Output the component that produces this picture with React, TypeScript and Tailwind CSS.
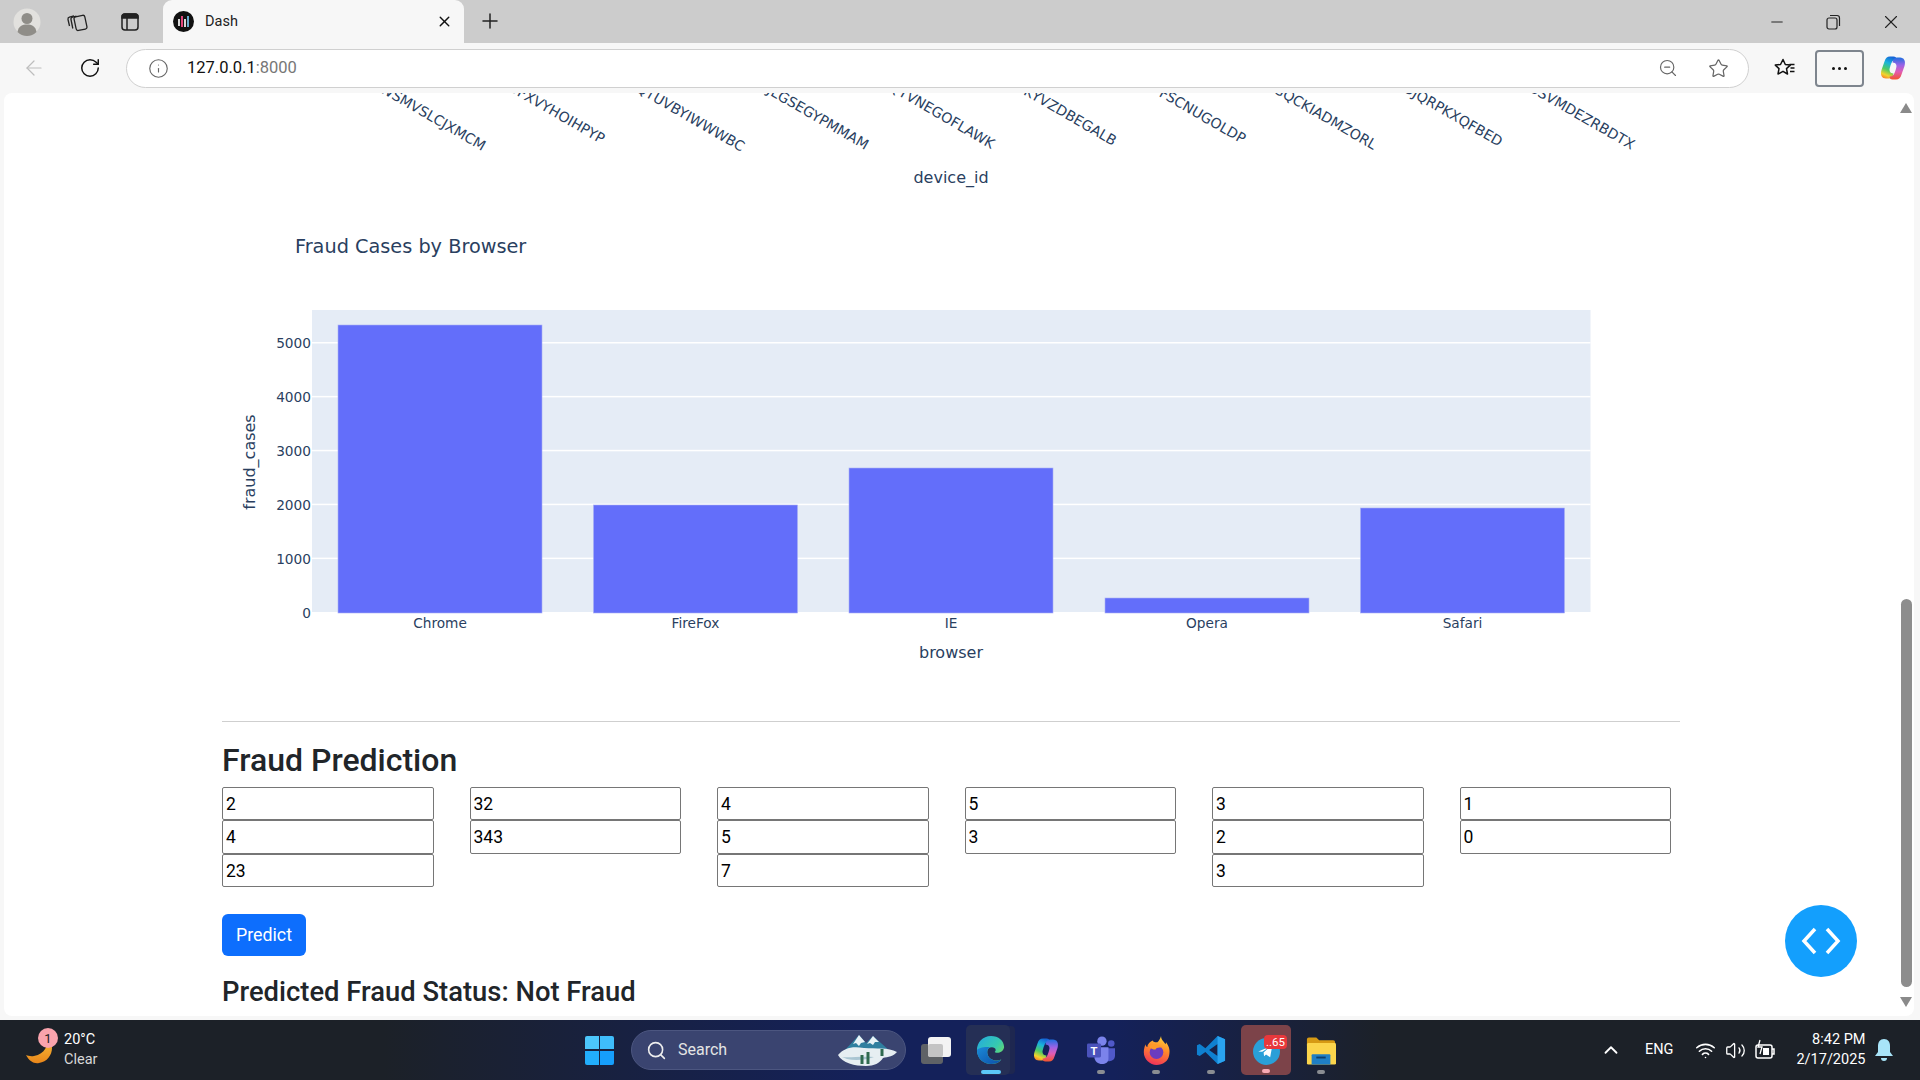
import { ArrowLeft, ChevronUp, Info, Minus, Plus, RotateCw, Search, Star, Volume2, Wifi, X, ZoomOut } from "lucide-react";

const ui = "font-['Roboto',sans-serif]";
const plotFont = "'DejaVu Sans', Verdana, sans-serif";

const deviceLabels = [
  { text: "WSMVSLCJXMCM", x: 482, y: 151 },
  { text: "OFXVYHOIHPYP", x: 601, y: 144 },
  { text: "QTUVBYIWWWBC", x: 741, y: 152 },
  { text: "JLGSEGYPMMAM", x: 865, y: 150 },
  { text: "QYVNEGOFLAWK", x: 991, y: 149 },
  { text: "SKYVZDBEGALB", x: 1113, y: 146 },
  { text: "KPFSCNUGOLDP", x: 1242, y: 144 },
  { text: "GQCKIADMZORL", x: 1373, y: 150 },
  { text: "DJQRPKXQFBED", x: 1499, y: 147 },
  { text: "USVMDEZRBDTX", x: 1631, y: 150 },
];

const bars = [
  { name: "Chrome", x: 338, top: 325 },
  { name: "FireFox", x: 593.5, top: 505 },
  { name: "IE", x: 849, top: 468 },
  { name: "Opera", x: 1105, top: 598 },
  { name: "Safari", x: 1360.5, top: 508 },
];

const ticks = [0, 1000, 2000, 3000, 4000, 5000];

const formColumns = [
  ["2", "4", "23"],
  ["32", "343"],
  ["4", "5", "7"],
  ["5", "3"],
  ["3", "2", "3"],
  ["1", "0"],
];

// the svg uses screen coordinates, the viewBox starts where the page starts
function Charts() {
  return (
    <svg viewBox="4 93 1896 628" width={1896} height={628} className="block shrink-0" style={{ fontFamily: plotFont }}>
      {deviceLabels.map((l) => (
        <text key={l.text} x={l.x} y={l.y} textAnchor="end" fontSize={14.1} fill="#2a3f5f" transform={`rotate(30 ${l.x} ${l.y})`}>
          {l.text}
        </text>
      ))}
      <text x={951} y={183} textAnchor="middle" fontSize={16} fill="#2a3f5f">device_id</text>
      <text x={295} y={253} fontSize={19.3} fill="#2a3f5f">Fraud Cases by Browser</text>

      <rect x={312} y={310} width={1278.5} height={302} fill="#e5ecf6" />
      {ticks.slice(1).map((t) => (
        <rect key={t} x={312} y={612.5 - t * 0.0539 - 1} width={1278.5} height={1.5} fill="#ffffff" />
      ))}
      {bars.map((b) => (
        <g key={b.name}>
          <rect x={b.x} y={b.top} width={204} height={613 - b.top} fill="#636efa" stroke="#a8b0f5" strokeWidth={0.6} />
          <text x={b.x + 102} y={628} textAnchor="middle" fontSize={13.7} fill="#2a3f5f">{b.name}</text>
        </g>
      ))}
      {ticks.map((t) => (
        <text key={t} x={311} y={613 - t * 0.0541 + 5} textAnchor="end" fontSize={13.7} fill="#2a3f5f">{t}</text>
      ))}
      <text x={951} y={658} textAnchor="middle" fontSize={16} fill="#2a3f5f">browser</text>
      <text x={255} y={462} textAnchor="middle" fontSize={16} fill="#2a3f5f" transform="rotate(-90 255 462)">fraud_cases</text>
    </svg>
  );
}

function Workspaces() {
  return (
    <svg width="22" height="22" viewBox="0 0 22 22" fill="none" stroke="#222" strokeWidth="1.3">
      <path d="M3.500 15 2 8.500a2 2 0 0 1 1.400-2.300L8 4.800" />
      <path d="M6.800 17.500 5 8.500a2 2 0 0 1 1.500-2.300l4-1" />
      <rect x="9" y="5" width="11" height="14" rx="2" transform="rotate(-12 14 12)" />
    </svg>
  );
}

function TabActions() {
  return (
    <svg width="20" height="20" viewBox="0 0 20 20" fill="none" stroke="#222" strokeWidth="1.500">
      <rect x="2" y="2" width="16" height="16" rx="3" />
      <path d="M2 5a3 3 0 0 1 3-3h10a3 3 0 0 1 3 3v1H2z" fill="#222" />
      <path d="M7 6v12" />
    </svg>
  );
}

function DashIcon() {
  return (
    <div className="flex h-[21px] w-[21px] items-center justify-center gap-[1.5px] rounded-full bg-[#111]">
      <span className="mt-[2px] h-[7px] w-[1.5px] bg-[#d8d8d8]" />
      <span className="h-[11px] w-[1.5px] bg-[#e0457b]" />
      <span className="mt-[3px] h-[8px] w-[1.5px] bg-[#d8d8d8]" />
      <span className="h-[11px] w-[1.5px] bg-[#6ac]" />
    </div>
  );
}

function Avatar() {
  return (
    <svg width="28" height="28" viewBox="0 0 28 28">
      <circle cx="14" cy="14" r="13.500" fill="#e2e1de" />
      <circle cx="14" cy="10.500" r="5.500" fill="#8f8d88" />
      <path d="M4.500 24c1-6 5-7.500 9.500-7.500s8.500 1.500 9.500 7.500a13.500 13.500 0 0 1-19 0z" fill="#8f8d88" />
    </svg>
  );
}

function FavoritesIcon() {
  return (
    <svg width="24" height="24" viewBox="0 0 24 24" fill="none" stroke="#111" strokeWidth="1.500" strokeLinejoin="round">
      <path d="M10 3.500 12.300 8.500l5 .6-3.800 3.500 1 5.400L10 15.300 5 18l1-5.400L2.300 9.100l5.200-.6z" />
      <path d="M16.500 8.500h5M17.500 12h4M17 15.500h4.500" strokeWidth="1.300" />
    </svg>
  );
}

function Copilot({ size = 28, id }: { size?: number; id: string }) {
  return (
    <svg width={size} height={size} viewBox="0 0 28 28">
      <defs>
        <linearGradient id={`${id}a`} x1="0.6" y1="0" x2="0.3" y2="1">
          <stop offset="0" stopColor="#1565d8" />
          <stop offset="0.3" stopColor="#19b3dc" />
          <stop offset="0.6" stopColor="#4fcb63" />
          <stop offset="0.85" stopColor="#f4d32c" />
          <stop offset="1" stopColor="#f58a2a" />
        </linearGradient>
        <linearGradient id={`${id}b`} x1="0.5" y1="0" x2="0.5" y2="1">
          <stop offset="0" stopColor="#1f6fe0" />
          <stop offset="0.35" stopColor="#9a63e6" />
          <stop offset="0.65" stopColor="#e15cb4" />
          <stop offset="1" stopColor="#f4542c" />
        </linearGradient>
      </defs>
      <path d="M11 2.500c-3 0-4.500 1.800-5.500 5L2.500 16c-1.500 5 .5 8.500 4.500 8.500h3c2 0 3.500-1 4-3l.5-2c-2 0-4-1-4-3.500 0-1 1-5 2-7 .8-2 2-3.500 5-3.500 0-2-1-3-3-3z" fill={`url(#${id}a)`} />
      <path d="M17 25.500c3 0 4.500-1.800 5.500-5l3-8.500c1.500-5-.5-8.500-4.500-8.500h-3c-2 0-3.500 1-4 3l-.5 2c2 0 4 1 4 3.500 0 1-1 5-2 7-.8 2-2 3.500-5 3.500 0 2 1 3 3 3z" fill={`url(#${id}b)`} />
    </svg>
  );
}

function WindowsLogo() {
  return (
    <div className="grid h-[29px] w-[29px] grid-cols-2 gap-[1.5px]">
      <span className="rounded-tl-[2px] bg-[#4cc6fb]" />
      <span className="rounded-tr-[2px] bg-[#3fbdfb]" />
      <span className="rounded-bl-[2px] bg-[#22aefc]" />
      <span className="rounded-br-[2px] bg-[#169efb]" />
    </div>
  );
}

function Mountains() {
  return (
    <svg width="60" height="32" viewBox="0 0 60 32">
      <path d="M6 17 21 1l7 8 7-7 17 15z" fill="#2f7f9f" />
      <path d="M21 1l6 7-4 1-2 3-3-3-3 1zM35 2l6 6-4 0-2 3-3-2-3 1z" fill="#e8f2f6" />
      <path d="M0 21c6-7 14-9 26-7 12 1 24-1 33 4-3 4-9 5-14 6-3 5-9 8-17 8-11 0-24-3-28-11z" fill="#e6eef2" />
      <path d="M4 23c8 1 18-1 32 0-8 3-19 4-27 2z" fill="#a9c5d2" />
      <path d="M24 30v-9M30 30V18M44 22v-7" stroke="#2f6a4f" strokeWidth="3" />
    </svg>
  );
}

function TaskView() {
  return (
    <div className="relative h-[27px] w-[30px]">
      <span className="absolute bottom-0 left-0 h-[20px] w-[22px] rounded-[3px] bg-[#5f6266]" />
      <span className="absolute right-0 top-0 h-[20px] w-[23px] rounded-[3px] bg-[#f3f3f3]" />
      <span className="absolute left-[7px] top-[7px] h-[13px] w-[15px] rounded-[2px] bg-[#c4c4c4]" />
    </div>
  );
}

function Edge() {
  return (
    <svg width="30" height="30" viewBox="0 0 32 32" className="ml-[6px]">
      <defs>
        <linearGradient id="edgeA" x1="0" y1="0" x2="1" y2="0.8">
          <stop offset="0" stopColor="#23a9e0" />
          <stop offset="0.6" stopColor="#36c9b0" />
          <stop offset="1" stopColor="#7ee04f" />
        </linearGradient>
        <linearGradient id="edgeB" x1="0" y1="0" x2="1" y2="1">
          <stop offset="0" stopColor="#1b8ad8" />
          <stop offset="1" stopColor="#0c4fa8" />
        </linearGradient>
      </defs>
      <path d="M16 1C7 1 1 8 1 16c0 9 7 15 15 15 5 0 9-2 11-5-6 3-15 0-15-8 0-3 2-5 5-5 2 0 4 1 4 3 0 1-1 2-1 2 2 2 9 1 10-5C30 6 24 1 16 1z" fill="url(#edgeA)" />
      <path d="M1 16c0 9 7 15 15 15 5 0 9-2 11-5-6 3-15 0-15-8 0-3 1-4 3-5-6-1-13 1-14 3z" fill="url(#edgeB)" />
    </svg>
  );
}

function Teams() {
  return (
    <svg width="30" height="28" viewBox="0 0 32 30">
      <circle cx="17" cy="5.500" r="5" fill="#7b83eb" />
      <circle cx="27" cy="8" r="3.500" fill="#5059c9" />
      <path d="M22 13h9v8c0 4-3 6-6 6s-3-1-3-3z" fill="#5059c9" />
      <path d="M9 12h15v12c0 4-3 6-7 6s-8-3-8-7z" fill="#7b83eb" />
      <rect x="1" y="8" width="15" height="15" rx="1.500" fill="#4b53bc" />
      <text x="8.500" y="20" textAnchor="middle" fontSize="12" fontWeight="700" fill="#fff" fontFamily="'Liberation Sans', sans-serif">T</text>
    </svg>
  );
}

function Firefox() {
  return (
    <svg width="29" height="31" viewBox="0 0 32 34">
      <defs>
        <linearGradient id="ffA" x1="0.7" y1="0" x2="0.4" y2="1">
          <stop offset="0" stopColor="#ffd43a" />
          <stop offset="0.45" stopColor="#ff8a2a" />
          <stop offset="1" stopColor="#f0325a" />
        </linearGradient>
      </defs>
      <path d="M21 1c0 4 3 6 5 9 .5-1 .5-1.500.5-2 4 5 4.500 10 3.500 14-1 7-7 11-14 11S2 27 2 19c0-4 1-7 2-9 0 2 1 3 2 3 0-3 3-6 6-7 0 2 3 2 5 2 2-2 3-4 4-7z" fill="url(#ffA)" />
      <circle cx="16" cy="19" r="7.500" fill="#6a3cc0" />
      <path d="M8 12c4-3 11-3 14 2-3-1-7 0-7 2-3 0-6-1-7-4z" fill="#ff9a2a" />
    </svg>
  );
}

function VsCode() {
  return (
    <svg width="30" height="30" viewBox="0 0 32 32">
      <path d="M23 1 10 14 4 9.500 1 11v10l3 1.500 6-4.500 13 13 8-3.500V4.500zM23 9.500v13L14 16z" fill="#0f80d0" fillRule="evenodd" />
      <path d="M23 1l8 3.500v23L23 31z" fill="#2aa3f0" />
    </svg>
  );
}

function Telegram() {
  return (
    <div className="relative flex h-[50px] w-[50px] items-center justify-center rounded-[5px] bg-[#7c4349]">
      <svg width="27" height="27" viewBox="0 0 28 28" className="mt-[2px]">
        <circle cx="14" cy="14" r="14" fill="#2a9fd8" />
        <path d="M5.500 14 20 8l-2.200 12-4.300-3-2 2-.5-4 6-5.500-7.500 4.700z" fill="#fff" />
      </svg>
      <span className={`${ui} absolute right-[4px] top-[10px] rounded-[4px] bg-[#e8383c] px-[2px] text-[11.5px] leading-[14px] text-white`}>..65</span>
      <span className="absolute bottom-[2px] left-[21px] h-[4px] w-[8px] rounded-full bg-[#f7a9b4]" />
    </div>
  );
}

function Folder() {
  return (
    <svg width="30" height="29" viewBox="0 0 32 30">
      <path d="M1 3a2 2 0 0 1 2-2h8l3 3h15a2 2 0 0 1 2 2v4H1z" fill="#d69a14" />
      <rect x="1" y="7" width="31" height="23" rx="1.500" fill="#fbd54c" />
      <path d="M6 20a1 1 0 0 1 1-1h18a1 1 0 0 1 1 1v10H6z" fill="#1f7fc4" />
      <rect x="11" y="21.500" width="10" height="2" fill="#0c3f6d" />
    </svg>
  );
}

function Moon() {
  return (
    <svg width="32" height="32" viewBox="0 0 32 32">
      <defs>
        <linearGradient id="moonA" x1="0" y1="0" x2="0" y2="1">
          <stop offset="0" stopColor="#f8c13c" />
          <stop offset="1" stopColor="#e9861a" />
        </linearGradient>
      </defs>
      <path d="M22 3c3 8-1 17-12 19-3 .5-6 0-8-1 3 6 8 9 13 8 8-1 13-8 13-15 0-5-3-9-6-11z" fill="url(#moonA)" />
    </svg>
  );
}

function Battery() {
  return (
    <svg width="24" height="24" viewBox="0 0 24 24" fill="none" stroke="#fff" strokeWidth="1.500">
      <rect x="3" y="7" width="16" height="13" rx="2" />
      <path d="M19 11h2v5h-2" />
      <rect x="10" y="10" width="6" height="7" fill="#fff" stroke="none" />
      <path d="M7 2 5 9h4l-2 7" strokeWidth="1.300" />
    </svg>
  );
}

function Bell() {
  return (
    <svg width="20" height="24" viewBox="0 0 20 24" fill="#a8e4f8">
      <path d="M10 1c4 0 6 3 6 7v6l3 4H1l3-4V8c0-4 2-7 6-7z" />
      <path d="M7 20h6a3 3 0 0 1-6 0z" />
    </svg>
  );
}

function TaskApp({ children, dot }: { children: React.ReactNode; dot?: boolean }) {
  return (
    <div className="relative flex h-[50px] w-[55px] items-center justify-center">
      {children}
      {dot && <span className="absolute bottom-[1px] left-1/2 h-[4px] w-[8px] -translate-x-1/2 rounded-full bg-[#8a8d92]" />}
    </div>
  );
}

export default function App() {
  return (
    <div className={`${ui} flex h-screen w-[1920px] flex-col overflow-hidden bg-[#f7f7f7]`}>
      {/* tab strip */}
      <div className="flex h-[43px] shrink-0 items-center bg-[#cccccc]">
        <div className="ml-[13px] flex w-[28px] justify-center"><Avatar /></div>
        <div className="ml-[25px] flex w-[22px] justify-center"><Workspaces /></div>
        <div className="ml-[31px] flex w-[22px] justify-center"><TabActions /></div>
        <div className="ml-[22px] flex h-[43px] w-[301px] items-center rounded-t-[9px] bg-[#f7f7f7] pl-[10px]">
          <DashIcon />
          <span className="ml-[11px] text-[14.5px] text-[#222]">Dash</span>
          <X size={17} strokeWidth={2} className="ml-auto mr-[11px] text-[#111]" />
        </div>
        <Plus size={24} strokeWidth={1.5} className="ml-[14px] -translate-y-[1px] text-[#222]" />
        <div className="ml-auto flex items-center text-[#222]">
          <Minus size={18} strokeWidth={1.3} />
          <svg width="16" height="16" viewBox="0 0 16 16" fill="none" stroke="#222" strokeWidth="1.200" className="ml-[39px]">
            <rect x="2" y="4" width="10" height="11" rx="2" />
            <path d="M5 1.500h7a2.500 2.500 0 0 1 2.500 2.500v8" />
          </svg>
          <X size={22} strokeWidth={1.2} className="ml-[39px] mr-[18px]" />
        </div>
      </div>

      {/* toolbar */}
      <div className="flex h-[50px] shrink-0 items-center">
        <ArrowLeft size={24} strokeWidth={1.2} className="ml-[22px] text-[#bdbdbd]" />
        <RotateCw size={22} strokeWidth={1.6} className="ml-[33px] text-[#111]" />
        <div className="ml-[25px] flex h-[39px] w-[1623px] items-center rounded-full border-[1.5px] border-[#d0d0d0] bg-white">
          <Info size={21} strokeWidth={1.3} className="ml-[21px] text-[#666]" />
          <span className="ml-[18px] text-[16.5px] text-[#111]">127.0.0.1<span className="text-[#777]">:8000</span></span>
          <ZoomOut size={20} strokeWidth={1.4} className="ml-auto text-[#666]" />
          <Star size={21} strokeWidth={1.4} className="ml-[30px] mr-[19px] text-[#666]" />
        </div>
        <div className="ml-[24px]"><FavoritesIcon /></div>
        <div className="ml-[18px] flex h-[37px] w-[49px] items-center justify-center gap-[3px] rounded-[4px] border-2 border-[#7e858e]">
          <span className="h-[3px] w-[3px] rounded-full bg-[#111]" />
          <span className="h-[3px] w-[3px] rounded-full bg-[#111]" />
          <span className="h-[3px] w-[3px] rounded-full bg-[#111]" />
        </div>
        <div className="ml-[15px]"><Copilot id="cpTool" /></div>
      </div>

      {/* page */}
      <div className="relative ml-[4px] mr-[6px] h-[923px] shrink-0 overflow-hidden rounded-[8px] bg-white">
        <Charts />
        <hr className="ml-[218px] w-[1458px] border-0 border-t-[1.5px] border-[#cfcfcf]" />
        <div className="ml-[218px] w-[1486px]">
          <h2 className="mt-[19px] h-[38px] text-[32px] font-medium leading-[38px] text-[#212529]">Fraud Prediction</h2>
          <div className="mt-[8px] grid grid-cols-[repeat(6,211.5px)] gap-x-[36px]">
            {formColumns.map((col, i) => (
              <div key={i} className="flex flex-col items-start">
                {col.map((v, j) => (
                  <input
                    key={j}
                    readOnly
                    value={v}
                    className="h-[33.3px] w-[211.5px] rounded-[2px] border border-[#767676] bg-white px-[3px] pt-[1px] text-[17.5px] text-black"
                  />
                ))}
              </div>
            ))}
          </div>
          <button className="mt-[27px] block h-[42px] w-[84px] rounded-[6px] bg-[#0d6efd] pt-[1px] text-[17.8px] text-white">Predict</button>
          <h3 className="mt-[19px] text-[27.4px] font-medium leading-[34px] text-[#212529]">Predicted Fraud Status: Not Fraud</h3>
        </div>

        {/* scrollbar */}
        <div className="absolute right-0 top-0 flex h-full w-[16px] flex-col items-center">
          <div className="mt-[10px] h-0 w-0 border-x-[6.5px] border-b-[10px] border-x-transparent border-b-[#8a8a8a]" />
          <div className="mt-[486px] h-[388px] w-[11px] rounded-full bg-[#8d8d8d]" />
          <div className="mt-[10px] h-0 w-0 border-x-[6.5px] border-t-[10px] border-x-transparent border-t-[#8a8a8a]" />
        </div>

        {/* floating button */}
        <div className="absolute left-[1781px] top-[812px] flex h-[72px] w-[72px] items-center justify-center rounded-full bg-[#139ffd]">
          <svg width="40" height="28" viewBox="0 0 40 28" fill="none" stroke="#fff" strokeWidth="3.500">
            <path d="M14 2 3 14l11 12M26 2l11 12-11 12" />
          </svg>
        </div>
      </div>

      {/* taskbar */}
      <div className="relative mt-[4px] flex h-[60px] shrink-0 items-center bg-[linear-gradient(90deg,#1c2128_0%,#1c2128_20%,#14215a_45%,#14215a_58%,#1c2128_72%,#1c2128_100%)] text-white">
        <div className="relative ml-[24px] w-[32px]">
          <Moon />
          <span className="absolute -top-[6px] left-[14px] flex h-[20px] w-[20px] items-center justify-center rounded-full bg-[#f9a3ad] text-[13px] leading-none text-[#222]">1</span>
        </div>
        <div className="ml-[8px] flex w-[60px] flex-col text-[14.5px] leading-[20px]">
          <span>20°C</span>
          <span className="text-[#d8d8d8]">Clear</span>
        </div>
        <div className="ml-[461px]"><WindowsLogo /></div>
        <div className="ml-[17px] flex h-[40px] w-[275px] items-center rounded-full border border-[#4c5680] bg-[#3a4470]">
          <Search size={21} strokeWidth={1.8} className="ml-[14px] text-[#eee]" />
          <span className="ml-[11px] text-[16px] text-[#e4e4e4]">Search</span>
          <div className="ml-auto mr-[7px] flex"><Mountains /></div>
        </div>
        <div className="ml-[15px]"><TaskView /></div>
        <div className="relative ml-[15px] flex h-[50px] w-[44px] items-center justify-center rounded-[5px] bg-[#252f55] shadow-[6px_0_0_-1px_#1e2750]">
          <Edge />
          <span className="absolute bottom-[1px] left-[15px] h-[4px] w-[20px] rounded-full bg-[#5cc8f8]" />
        </div>
        <div className="ml-[8.5px]"><TaskApp><Copilot size={28} id="cpBar" /></TaskApp></div>
        <TaskApp dot><Teams /></TaskApp>
        <TaskApp dot><Firefox /></TaskApp>
        <TaskApp dot><VsCode /></TaskApp>
        <div className="ml-[2.5px]"><Telegram /></div>
        <div className="ml-[2.5px]"><TaskApp dot><Folder /></TaskApp></div>

        <ChevronUp size={22} strokeWidth={2} className="ml-[251.5px]" />
        <span className="ml-[23px] text-[14.5px]">ENG</span>
        <Wifi size={21} strokeWidth={1.8} className="ml-[21.5px]" />
        <Volume2 size={21} strokeWidth={1.5} className="ml-[9px]" />
        <div className="ml-[7.5px]"><Battery /></div>
        <div className="ml-[10px] flex w-[78px] flex-col items-end text-[14.5px] leading-[20px]">
          <span>8:42 PM</span>
          <span>2/17/2025</span>
        </div>
        <div className="ml-[9px]"><Bell /></div>
      </div>
    </div>
  );
}
